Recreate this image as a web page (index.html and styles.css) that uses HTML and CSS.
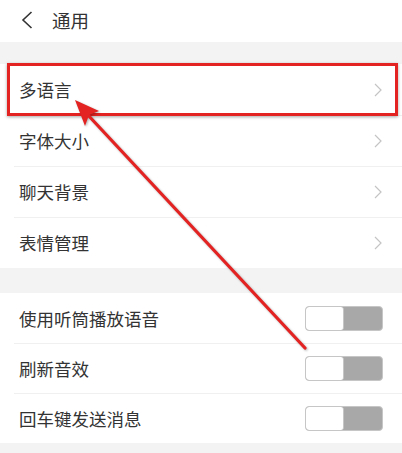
FILE: index.html
```html
<!DOCTYPE html>
<html lang="zh-CN">
<head>
  <meta charset="UTF-8" />
  <meta name="viewport" content="width=device-width, initial-scale=1.0"/>
  <title>通用</title>
  <link rel="stylesheet" href="styles.css">
</head>
<body>
  <!-- Top bar -->
  <header class="topbar">
    <svg class="back" width="14" height="20" viewBox="0 0 14 20">
      <path d="M11.5 2 L3 10 L11.5 18" fill="none" stroke="#333" stroke-width="1.6"/>
    </svg>
    <span class="title">通用</span>
  </header>

  <div class="gap first-gap"></div>

  <!-- Links -->
  <ul class="group">
    <li class="row link"><span>多语言</span><svg class="chev" viewBox="0 0 8 14"><path d="M1 1 L7 7 L1 13"/></svg></li>
    <li class="row link"><span>字体大小</span><svg class="chev" viewBox="0 0 8 14"><path d="M1 1 L7 7 L1 13"/></svg></li>
    <li class="row link"><span>聊天背景</span><svg class="chev" viewBox="0 0 8 14"><path d="M1 1 L7 7 L1 13"/></svg></li>
    <li class="row link"><span>表情管理</span><svg class="chev" viewBox="0 0 8 14"><path d="M1 1 L7 7 L1 13"/></svg></li>
  </ul>

  <div class="gap"></div>

  <!-- Switches -->
  <ul class="group">
    <li class="row"><span>使用听筒播放语音</span><span class="toggle"><i></i></span></li>
    <li class="row"><span>刷新音效</span><span class="toggle"><i></i></span></li>
    <li class="row"><span>回车键发送消息</span><span class="toggle"><i></i></span></li>
  </ul>

  <div class="gap"></div>

  <!-- Annotation laid over the screenshot -->
  <div class="mark-box"></div>
  <svg class="mark-arrow" width="402" height="453" viewBox="0 0 402 453">
    <line x1="305" y1="348" x2="87" y2="114" stroke="#e32222" stroke-width="3.2" stroke-linecap="round"/>
    <polygon points="75,100 99,111 89,115 85,126" fill="#e32222"/>
  </svg>
</body>
</html>
```

FILE: styles.css
```css
/* Reset and Base Styles */
* {
  margin: 0;
  padding: 0;
  box-sizing: border-box;
}
body {
  font-family: "Noto Sans CJK SC", "Noto Sans", sans-serif;
  background-color: #f3f3f3;
  color: #333;
  width: 402px;
  height: 453px;
  overflow: hidden;
  position: relative;
}

/* Top Bar */
.topbar {
  height: 42px;
  background-color: #fff;
  display: flex;
  align-items: center;
  padding: 0 0 2px 20px;
  gap: 18px;
}
.title {
  font-size: 18.5px;
  color: #333;
}

/* Gray separators between groups */
.gap {
  height: 25px;
}
.first-gap {
  height: 22px;
}

/* Setting rows */
.group {
  list-style: none;
  background-color: #fff;
}
.row {
  height: 50px;
  display: flex;
  align-items: center;
  justify-content: space-between;
  padding: 0 19px;
  font-size: 17.5px;
  position: relative;
}
.row.link {
  height: 51px;
}
.row + .row::before {
  content: "";
  position: absolute;
  top: 0;
  left: 14px;
  right: 0;
  border-top: 1px solid #f0f0f0;
}

/* Chevron */
.chev {
  width: 8px;
  height: 14px;
  margin-right: 1px;
  fill: none;
  stroke: #c4c4c4;
  stroke-width: 1.2;
}

/* Off switch */
.toggle {
  width: 78px;
  height: 25px;
  border: 1px solid #c6c6c6;
  border-radius: 4px;
  background-color: #a8a8a8;
  overflow: hidden;
  display: flex;
}
.toggle i {
  width: 38px;
  background-color: #fff;
  border-right: 1px solid #c6c6c6;
  border-radius: 3px;
}

/* Red highlight annotation */
.mark-box {
  position: absolute;
  left: 7px;
  top: 63px;
  width: 391px;
  height: 53px;
  border: 3px solid #e32222;
  box-shadow: 0 1px 3px rgba(0, 0, 0, 0.35);
}
.mark-arrow {
  position: absolute;
  left: 0;
  top: 0;
  filter: drop-shadow(1px 1px 1px rgba(0, 0, 0, 0.3));
}
```
